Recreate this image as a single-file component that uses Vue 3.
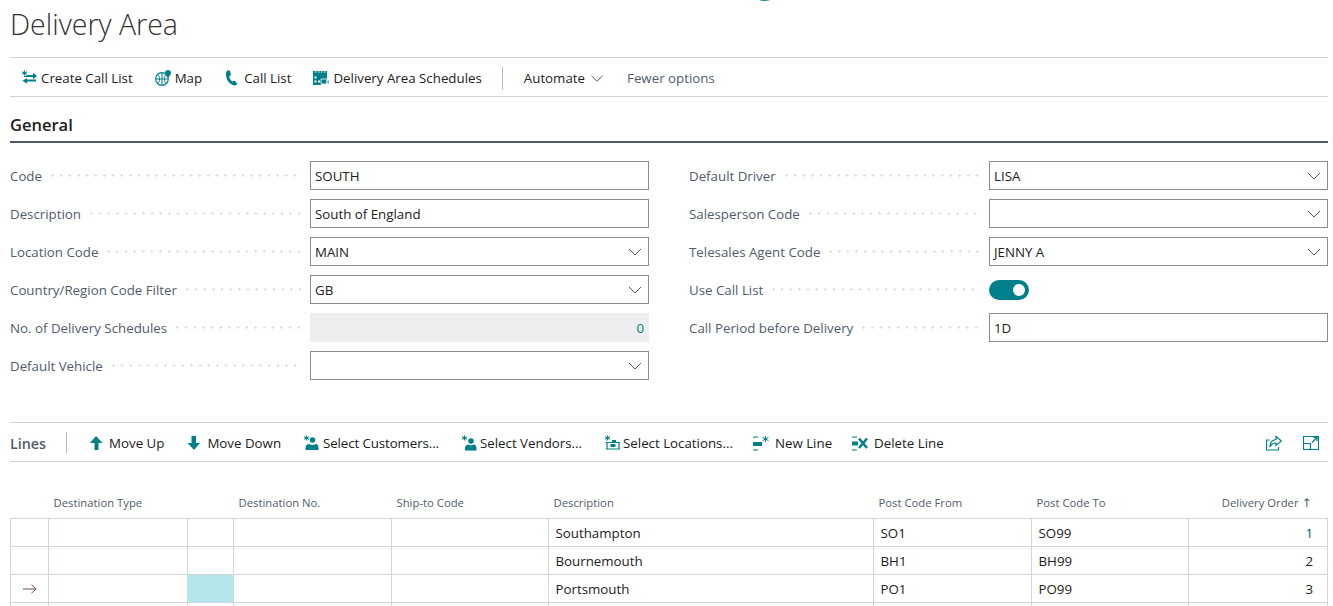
<template>
  <div class="page">
    <svg class="top-arc" width="18" height="3" viewBox="0 0 18 3">
      <path d="M2 -3 C3 1 14 1 16 -3" fill="none" stroke="#2a8f98" stroke-width="2" />
    </svg>

    <h1 class="page-title">Delivery Area</h1>

    <div class="action-bar">
      <button class="action">
        <svg class="ico" viewBox="0 0 16 16">
          <path d="M3.500 .5v5M1 1.700l5 2.600M6 1.700 1 4.300" class="thin" />
          <path d="M7 5h5V2.800L16 6l-4 3.200V7H3V6z" class="fill" />
          <path d="M15 9.500v2H6v2.300L1.500 10.800 6 8v1.500z" class="fill" />
        </svg>
        <span>Create Call List</span>
      </button>
      <button class="action">
        <svg class="ico" viewBox="0 0 16 16">
          <circle cx="7" cy="9" r="6.300" class="line" />
          <path d="M1 9h12M7 3v12M3 4.500c2 2 2 7 0 9M11 4.500c-2 2-2 7 0 9" class="thin" />
          <path d="M13 0c-1.700 0-3 1.200-3 2.800C10 4.800 13 8 13 8s3-3.200 3-5.200C16 1.200 14.700 0 13 0z" class="fill" />
        </svg>
        <span>Map</span>
      </button>
      <button class="action">
        <svg class="ico" viewBox="0 0 16 16">
          <path d="M3 .5 6 .5l1 4.500-1.700 1.200c.3 2.300 1.300 4.200 3 5.400l2-1 3 2.800-1.500 2c-1.200.3-2.800 0-4.200-1C3.800 12.500 1.700 7.800 2 3z" class="fill" />
        </svg>
        <span>Call List</span>
      </button>
      <button class="action">
        <svg class="ico" viewBox="0 0 16 16">
          <path d="M0 1h14v2H0zM0 3h14v8H8v4H0z" class="fill" />
          <path d="M2 1.500h1.500v1H2zM5 1.500h1.500v1H5zM8 1.500h1.500v1H8zM11 1.500h1.500v1H11zM1.500 6.500h2v2h-2zM1.500 10.500h2v2h-2zM5 10.500h2v2H5z" fill="#fff" />
          <path d="M8 9h6v5H8zM14 10h2v4h-2z" class="fill" stroke="#fff" stroke-width=".8" />
        </svg>
        <span>Delivery Area Schedules</span>
      </button>
      <span class="divider main"></span>
      <button class="action plain">
        <span>Automate</span>
        <svg class="chevron" width="12" height="7" viewBox="0 0 12 7"><path d="M.5.800 6 6.200 11.500.800" /></svg>
      </button>
      <button class="action plain muted fewer"><span>Fewer options</span></button>
    </div>

    <section class="general">
      <h2 class="section-title">General</h2>
      <div class="form-grid">
        <div v-for="col in fieldColumns" :key="col[0].label" class="form-col">
          <div v-for="field in col" :key="field.label" class="field">
            <label class="field-label">{{ field.label }}</label>
            <span class="leader"></span>
            <div v-if="field.type === 'toggle'" class="field-value bare">
              <span class="toggle"><i></i></span>
            </div>
            <div v-else class="field-value input" :class="{ readonly: field.type === 'readonly' }">
              <span>{{ field.value }}</span>
              <svg v-if="field.type === 'select'" class="chevron select-chev" width="14" height="8" viewBox="0 0 14 8"><path d="M1 1l6 6 6-6" /></svg>
            </div>
          </div>
        </div>
      </div>
    </section>

    <div class="lines-bar">
      <span class="lines-title">Lines</span>
      <span class="divider small"></span>
      <button class="action wide">
        <svg class="ico" viewBox="0 0 16 16"><path d="M8 1 14.500 8H10.500v7H6.500V8H2z" class="fill" /></svg>
        <span>Move Up</span>
      </button>
      <button class="action wide">
        <svg class="ico" viewBox="0 0 16 16"><path d="M8 15 1.500 8h4V1h4.500v7h4z" class="fill" /></svg>
        <span>Move Down</span>
      </button>
      <button class="action customers">
        <svg class="ico" viewBox="0 0 16 16">
          <path d="M3.500 .5v5M1 1.700l5 2.600M6 1.700 1 4.300" class="thin" />
          <circle cx="9.500" cy="5" r="2.800" class="fill" />
          <path d="M2.500 15v-2.500C2.500 10 4.500 9 6.500 9c1 1.200 5 1.200 6 0 2 0 3 1.200 3 3.500V15z" class="fill" />
        </svg>
        <span>Select Customers...</span>
      </button>
      <button class="action narrow">
        <svg class="ico" viewBox="0 0 16 16">
          <path d="M3.500 .5v5M1 1.700l5 2.600M6 1.700 1 4.300" class="thin" />
          <circle cx="10" cy="6" r="2.800" class="fill" />
          <path d="M4 15.500v-2.500c0-2 1.800-3.500 3.500-3.500 1 1 4 1 5 0 1.700 0 3 1.500 3 3.500v2.500z" class="fill" />
        </svg>
        <span>Select Vendors...</span>
      </button>
      <button class="action narrow">
        <svg class="ico" viewBox="0 0 16 16">
          <path d="M3.500 .5v5M1 1.700l5 2.600M6 1.700 1 4.300" class="thin" />
          <path d="M2 7.500h14M3 7.500v6.500M15 7.500v6.500M2 14h14" class="line" />
          <path d="M6.500 9h5v3h-5z" class="fill" />
          <path d="M8 5h4v2H8z" class="fill" />
        </svg>
        <span>Select Locations...</span>
      </button>
      <button class="action tight">
        <svg class="ico" viewBox="0 0 16 16">
          <path d="M1 3V2h4M1 14v1h4" class="line" />
          <path d="M0 7h9v4H0z" class="fill" />
          <path d="M12.500 1v6M9.500 2.300l6 3.400M15.500 2.300l-6 3.400" class="thin" />
        </svg>
        <span>New Line</span>
      </button>
      <button class="action tight">
        <svg class="ico" viewBox="0 0 16 16">
          <path d="M1 3V2h4M1 14v1h4" class="line" />
          <path d="M0 6.500h6v4H0z" class="fill" />
          <path d="M7 3.500l8 9.500M15 3.500 7 13" fill="none" stroke="#00808a" stroke-width="2.500" />
        </svg>
        <span>Delete Line</span>
      </button>
      <div class="lines-tools">
        <svg class="ico" viewBox="0 0 16 16">
          <path d="M3.500 5H.5v10h12v-3" class="line" />
          <path d="M10 1.500l5.500 4.500-5.500 4.500V8C7 8 5 9.500 4 12c0-4 2-7 6-7.500z" class="line" />
        </svg>
        <svg class="ico" viewBox="0 0 16 16">
          <path d="M.5 1.500h15v13H.5zM.5 8.500h7v6" class="line" />
          <path d="M9 7.500l5-5M10.500 2.500h3.500V6" class="line" />
        </svg>
      </div>
    </div>

    <table class="lines-table">
      <colgroup>
        <col v-for="w in colWidths" :key="w.key" :style="{ width: w.width + 'px' }" />
      </colgroup>
      <thead>
        <tr>
          <th></th>
          <th>Destination Type</th>
          <th></th>
          <th>Destination No.</th>
          <th>Ship-to Code</th>
          <th>Description</th>
          <th>Post Code From</th>
          <th>Post Code To</th>
          <th class="num">Delivery Order <span class="sort">↑</span></th>
        </tr>
      </thead>
      <tbody>
        <tr v-for="(row, i) in rows" :key="row.desc">
          <td class="marker">
            <svg v-if="i === 2" width="14" height="10" viewBox="0 0 14 10"><path d="M0 5h13M8.500 .8 13 5 8.500 9.200" fill="none" stroke="#6a4a4a" /></svg>
          </td>
          <td></td>
          <td :class="{ active: i === 2 }"></td>
          <td></td>
          <td></td>
          <td>{{ row.desc }}</td>
          <td>{{ row.from }}</td>
          <td>{{ row.to }}</td>
          <td class="num" :class="{ link: i === 0 }">{{ row.order }}</td>
        </tr>
        <tr class="clipped"><td v-for="n in 9" :key="n"></td></tr>
      </tbody>
    </table>
  </div>
</template>

<script setup>
const fieldColumns = [
  [
    { label: 'Code', value: 'SOUTH', type: 'text' },
    { label: 'Description', value: 'South of England', type: 'text' },
    { label: 'Location Code', value: 'MAIN', type: 'select' },
    { label: 'Country/Region Code Filter', value: 'GB', type: 'select' },
    { label: 'No. of Delivery Schedules', value: '0', type: 'readonly' },
    { label: 'Default Vehicle', value: '', type: 'select' }
  ],
  [
    { label: 'Default Driver', value: 'LISA', type: 'select' },
    { label: 'Salesperson Code', value: '', type: 'select' },
    { label: 'Telesales Agent Code', value: 'JENNY A', type: 'select' },
    { label: 'Use Call List', type: 'toggle' },
    { label: 'Call Period before Delivery', value: '1D', type: 'text' }
  ]
]

const colWidths = [38, 139, 46, 158, 157, 325, 158, 157, 139].map((width, key) => ({ width, key }))

const rows = [
  { desc: 'Southampton', from: 'SO1', to: 'SO99', order: 1 },
  { desc: 'Bournemouth', from: 'BH1', to: 'BH99', order: 2 },
  { desc: 'Portsmouth', from: 'PO1', to: 'PO99', order: 3 }
]
</script>

<style>
html, body {
  margin: 0;
  height: 606px;
  overflow: hidden;
  background: #fff;
}
</style>

<style scoped>
.page {
  position: relative;
  width: 1333px;
  height: 606px;
  overflow: hidden;
  padding: 0 5px 0 10px;
  box-sizing: border-box;
  font-family: "Open Sans", "Noto Sans", sans-serif;
  font-size: 13.3px;
  color: #212121;
}

.top-arc {
  position: absolute;
  left: 756px;
  top: 0;
}

.page-title {
  height: 57px;
  margin: 0;
  font-size: 28.500px;
  font-weight: 300;
  line-height: 49px;
  color: #333;
}

.action-bar,
.lines-bar {
  display: flex;
  align-items: center;
  height: 36px;
  padding-top: 2px;
  border-top: 1px solid #d2d2d8;
  border-bottom: 1px solid #d2d2d8;
  font-size: 13.300px;
}

.action-bar {
  padding-left: 11px;
  gap: 22px;
}

.action {
  display: flex;
  align-items: center;
  gap: 4px;
  padding: 0;
  border: 0;
  background: none;
  font: inherit;
  color: #212121;
  white-space: nowrap;
}

.action.plain {
  gap: 6px;
}

.action.wide {
  gap: 5px;
}

.action.customers {
  letter-spacing: -0.1px;
}

.action.narrow {
  gap: 3px;
}

.fewer {
  margin-left: 2px;
}

.action.tight {
  margin-left: -2px;
  gap: 6px;
}

.muted {
  color: #505c6d;
}

.ico {
  flex: none;
  width: 16px;
  height: 16px;
}

.fill {
  fill: #00808a;
}

.line,
.thin {
  fill: none;
  stroke: #00808a;
}

.line {
  stroke-width: 1.200;
}

.thin {
  stroke-width: 1;
}

.chevron path {
  fill: none;
  stroke: #505c6d;
}

.divider {
  width: 1px;
  height: 23px;
  background: #b8bcc4;
}

.divider.main {
  margin: 0 -1px 0 -2px;
}

.divider.small {
  height: 22px;
  margin: 0 -1px 0 20px;
}

.section-title {
  display: flex;
  align-items: center;
  height: 34px;
  margin: 0 0 18px;
  padding-top: 10px;
  border-bottom: 2px solid #505c6d;
  font-size: 16.500px;
  font-weight: 600;
  color: #212121;
}

.form-grid {
  display: grid;
  grid-template-columns: 639px 639px;
  column-gap: 40px;
  height: 261px;
}

.form-col {
  display: flex;
  flex-direction: column;
  gap: 9px;
}

.field {
  display: flex;
  align-items: center;
  height: 29px;
}

.field-label {
  color: #505c6d;
  white-space: nowrap;
}

.leader {
  flex: 1;
  height: 3px;
  margin: 0 9px;
  background-image: radial-gradient(circle at 1.500px 1.500px, #dadada 1px, transparent 1.100px);
  background-size: 8.670px 3px;
  background-repeat: repeat-x;
}

.field-value {
  flex: none;
  width: 339px;
  height: 29px;
  box-sizing: border-box;
}

.input {
  display: flex;
  align-items: center;
  justify-content: space-between;
  padding: 0 6px 0 4px;
  border: 1px solid #8a8d90;
  background: #fff;
}

.readonly {
  justify-content: flex-end;
  padding: 0 4px;
  border-color: #edeeef;
  background: #edeeef;
  color: #00808a;
}

.bare {
  display: flex;
  align-items: center;
}

.toggle {
  display: flex;
  align-items: center;
  justify-content: flex-end;
  width: 40px;
  height: 20px;
  padding-right: 4px;
  box-sizing: border-box;
  border-radius: 10px;
  background: #00808a;
}

.toggle i {
  width: 12px;
  height: 12px;
  border-radius: 50%;
  background: #fff;
}

.lines-bar {
  gap: 22px;
}

.lines-title {
  font-size: 14.300px;
  font-weight: 600;
  color: #505c6d;
  margin-right: -22px;
}

.lines-tools {
  display: flex;
  gap: 21px;
  margin-left: auto;
  padding-right: 9px;
}

.lines-table {
  width: 1317px;
  margin-top: 33px;
  table-layout: fixed;
  border-collapse: collapse;
}

.lines-table th {
  height: 0;
  padding: 0 6px 8px 5px;
  border: 0;
  text-align: left;
  font-size: 11.300px;
  font-weight: 400;
  color: #505c6d;
  white-space: nowrap;
}

.lines-table td {
  height: 27px;
  padding: 0 7px 0 6.500px;
  border: 1px solid #d4d4dc;
  color: #212121;
  white-space: nowrap;
}

.lines-table th.num {
  padding-right: 16px;
  text-align: right;
}

.lines-table td.num {
  padding-right: 14px;
  text-align: right;
}

.lines-table .link {
  color: #00606a;
}

.lines-table .marker {
  padding: 0;
  text-align: center;
}

.lines-table .active {
  background: #b2e6ea;
}

.sort {
  font-family: "DejaVu Sans", sans-serif;
  font-size: 12px;
  line-height: 1;
  color: #505c6d;
}
</style>
